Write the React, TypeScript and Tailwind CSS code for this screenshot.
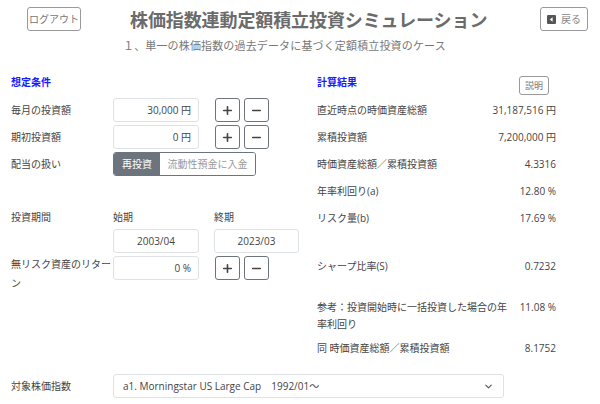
import { Plus, Minus, ChevronDown } from 'lucide-react';

const font = "font-['Open_Sans','Noto_Sans_CJK_JP',sans-serif]";

function StepButtons() {
  return (
    <div className="flex gap-[4px] ml-[16px] shrink-0">
      <button className="w-[25px] h-[24px] border border-[#6c757d] rounded-[3px] bg-white flex items-center justify-center text-[#444]">
        <Plus size={13} strokeWidth={3} />
      </button>
      <button className="w-[25px] h-[24px] border border-[#6c757d] rounded-[3px] bg-white flex items-center justify-center text-[#444]">
        <Minus size={13} strokeWidth={3} />
      </button>
    </div>
  );
}

function AmountInput({ value, align = 'right', width = 'w-[86px]' }: { value: string; align?: 'right' | 'center'; width?: string }) {
  return (
    <div
      className={`${width} h-[24px] shrink-0 border border-[#dee2e6] rounded-[3px] bg-white flex items-center text-[10px] text-[#444] ${
        align === 'right' ? 'justify-end pr-[7px]' : 'justify-center'
      }`}
    >
      {value}
    </div>
  );
}

function ResultRow({ label, value }: { label: string; value: string }) {
  return (
    <div className="h-[24px] mt-[3px] flex items-center justify-between text-[10px] text-[#444]">
      <span>{label}</span>
      <span>{value}</span>
    </div>
  );
}

export default function App() {
  return (
    <div className={`w-[600px] h-[404px] bg-white overflow-hidden ${font}`}>
      {/* header */}
      <div className="flex items-start h-[76px]">
        <button className="ml-[27px] mt-[7px] w-[54px] h-[24px] border border-[#999] rounded-[3px] text-[10px] text-[#777] flex items-center justify-center">
          ログアウト
        </button>
        <div className="ml-[42px] flex flex-col items-start">
          <h1 className="mt-[7px] ml-[7px] text-[18px] leading-[26px] font-bold text-[#6b6b6b] tracking-[-0.1px]">
            株価指数連動定額積立投資シミュレーション
          </h1>
          <p className="mt-[5px] text-[11px] leading-[16px] text-[#777] tracking-[0.15px]">
            １、単一の株価指数の過去データに基づく定額積立投資のケース
          </p>
        </div>
        <button className="ml-auto mr-[12px] mt-[7px] w-[48px] h-[24px] border border-[#999] rounded-[3px] text-[10px] text-[#888] flex items-center justify-center gap-[5px]">
          <svg width="9" height="9" viewBox="0 0 16 16">
            <rect width="16" height="16" rx="2" fill="#555" />
            <path d="M10 4 L5 8 L10 12 Z" fill="#fff" />
          </svg>
          戻る
        </button>
      </div>

      <div className="flex">
        {/* left column */}
        <div className="ml-[11px] w-[300px] shrink-0">
          <div className="text-[10px] leading-[13px] font-bold text-[#1a1aff]">想定条件</div>

          <div className="mt-[9px] flex items-center text-[10px] text-[#444]">
            <span className="w-[102px] shrink-0">毎月の投資額</span>
            <AmountInput value="30,000 円" />
            <StepButtons />
          </div>
          <div className="mt-[3px] flex items-center text-[10px] text-[#444]">
            <span className="w-[102px] shrink-0">期初投資額</span>
            <AmountInput value="0 円" />
            <StepButtons />
          </div>
          <div className="mt-[3px] flex items-center text-[10px] text-[#444]">
            <span className="w-[102px] shrink-0">配当の扱い</span>
            <div className="flex h-[24px] border border-[#6c757d] rounded-[3px] overflow-hidden shrink-0">
              <span className="w-[46px] bg-[#6c757d] text-white flex items-center justify-center">再投資</span>
              <span className="w-[95px] bg-white text-[#999] flex items-center justify-center">流動性預金に入金</span>
            </div>
          </div>

          <div className="mt-[32px] h-[18px] flex items-center text-[10px] text-[#444]">
            <span className="w-[102px] shrink-0">投資期間</span>
            <span className="w-[101px] shrink-0">始期</span>
            <span>終期</span>
          </div>
          <div className="mt-[3px] flex">
            <div className="w-[102px] shrink-0" />
            <AmountInput value="2003/04" align="center" />
            <div className="ml-[15px] shrink-0">
              <AmountInput value="2023/03" align="center" width="w-[85px]" />
            </div>
          </div>
          <div className="mt-[3px] flex items-start text-[10px] text-[#444]">
            <span className="w-[100px] mr-[2px] shrink-0 leading-[19px] -mt-[1px]">無リスク資産のリターン</span>
            <AmountInput value="0 %" />
            <StepButtons />
          </div>

          <div className="mt-[81px] flex items-center text-[10px] text-[#444]">
            <span className="w-[102px] shrink-0">対象株価指数</span>
            <div className="w-[391px] h-[24px] border border-[#dee2e6] rounded-[3px] bg-white flex items-center justify-between pl-[9px] pr-[9px] shrink-0">
              <span>a1. Morningstar US Large Cap　1992/01～</span>
              <ChevronDown size={11} strokeWidth={2.5} className="text-[#555]" />
            </div>
          </div>
        </div>

        {/* right column */}
        <div className="ml-[6px] w-[239px] shrink-0">
          <div className="h-[19px] flex items-start justify-between">
            <span className="text-[10px] leading-[13px] font-bold text-[#1a1aff]">計算結果</span>
            <button className="mr-[7px] w-[30px] h-[19px] border border-[#999] rounded-[3px] text-[9px] text-[#777] flex items-center justify-center">
              説明
            </button>
          </div>
          <ResultRow label="直近時点の時価資産総額" value="31,187,516 円" />
          <ResultRow label="累積投資額" value="7,200,000 円" />
          <ResultRow label="時価資産総額／累積投資額" value="4.3316" />
          <ResultRow label="年率利回り(a)" value="12.80 %" />
          <ResultRow label="リスク量(b)" value="17.69 %" />
          <div className="mt-[24px]">
            <ResultRow label="シャープ比率(S)" value="0.7232" />
          </div>
          <div className="mt-[21px] flex items-start justify-between text-[10px] leading-[17px] text-[#444]">
            <span className="w-[192px]">参考：投資開始時に一括投資した場合の年率利回り</span>
            <span>11.08 %</span>
          </div>
          <div className="mt-[1px]">
            <ResultRow label="同 時価資産総額／累積投資額" value="8.1752" />
          </div>
        </div>
      </div>
    </div>
  );
}
